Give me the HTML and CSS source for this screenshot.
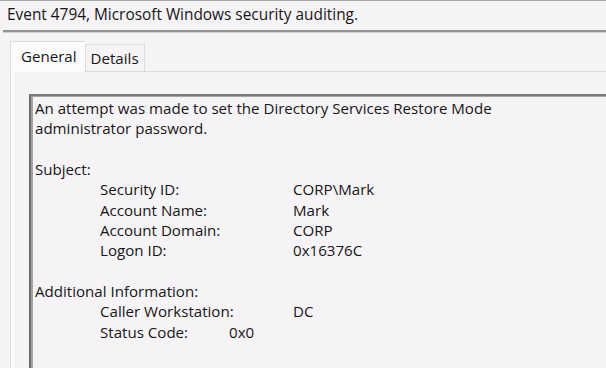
FILE: index.html
```html
<!DOCTYPE html>
<html>
<head>
<meta charset="utf-8">
<link rel="stylesheet" href="styles.css">
</head>
<body>
<div class="window">
  <div class="title">Event 4794, Microsoft Windows security auditing.</div>
  <div class="tabs">
    <div class="tab active">General</div>
    <div class="tab">Details</div>
  </div>
  <div class="panel">
    <div class="box">
      <div class="line">An attempt was made to set the Directory Services Restore Mode</div>
      <div class="line">administrator password.</div>
      <div class="line blank"></div>
      <div class="line">Subject:</div>
      <div class="row"><span class="label">Security ID:</span><span>CORP\Mark</span></div>
      <div class="row"><span class="label">Account Name:</span><span>Mark</span></div>
      <div class="row"><span class="label">Account Domain:</span><span>CORP</span></div>
      <div class="row"><span class="label">Logon ID:</span><span>0x16376C</span></div>
      <div class="line blank"></div>
      <div class="line">Additional Information:</div>
      <div class="row"><span class="label">Caller Workstation:</span><span>DC</span></div>
      <div class="row"><span class="label short">Status Code:</span><span>0x0</span></div>
    </div>
  </div>
</div>
</body>
</html>
```

FILE: styles.css
```css
html, body {
  margin: 0;
  padding: 0;
  background: #f6f3f6;
}
body {
  width: 606px;
  height: 368px;
  overflow: hidden;
  font-family: "Open Sans", "Noto Sans", sans-serif;
  font-size: 15.1px;
  color: #161616;
}
.window {
  border-top: 1px solid #a4a4a4;
}
.title {
  height: 29px;
  line-height: 27px;
  margin-left: 3px;
  padding-left: 4px;
  font-size: 15.4px;
  border-bottom: 2px solid #939393;
  box-shadow: 0 1px 0 #cfcfcf;
}
.tabs {
  display: flex;
  align-items: flex-end;
  margin-top: 8px;
  margin-left: 10px;
  height: 31px;
}
.tab {
  height: 27px;
  line-height: 27px;
  padding: 0 5px 0 5px;
  border: 1px solid #dcdcdc;
  border-bottom: none;
  box-sizing: border-box;
  background: #f6f3f6;
}
.tab.active {
  height: 31px;
  line-height: 28px;
  padding: 0 8px 0 10px;
  background: #fcfbfc;
  border-right: none;
  position: relative;
  z-index: 1;
  margin-bottom: -1px;
}
.panel {
  margin-left: 10px;
  border: 1px solid #dcdcdc;
  border-right: none;
  border-bottom: none;
  box-shadow: inset 3px 0 0 #fcfbfc;
  padding: 22px 0 0 18px;
  height: 280px;
}
.box {
  border-top: 2px solid #7c7c7c;
  border-left: 2px solid #6a6a6a;
  box-shadow: inset 2px 1px 0 #a4a4a4;
  padding: 2px 0 0 4px;
  height: 270px;
}
.line, .row {
  height: 20.35px;
  line-height: 20.35px;
  white-space: nowrap;
}
.row {
  display: flex;
  padding-left: 65px;
}
.label {
  width: 193px;
}
.label.short {
  width: 129px;
}
```
